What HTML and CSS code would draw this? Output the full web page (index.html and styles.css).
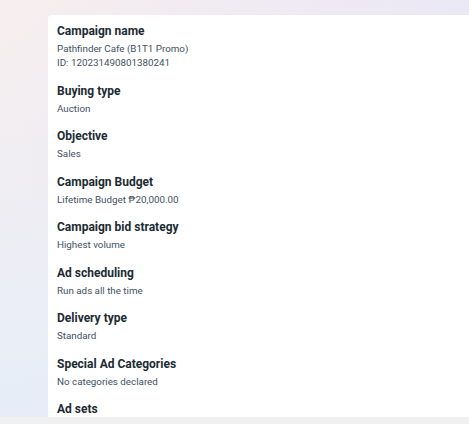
FILE: index.html
```html
<!DOCTYPE html>
<html>
<head>
<meta charset="utf-8">
<link rel="stylesheet" href="styles.css">
</head>
<body>
<div class="page">
  <div class="stage">
    <div class="card">
      <div class="section">
        <div class="label">Campaign name</div>
        <div class="value">Pathfinder Cafe (B1T1 Promo)</div>
        <div class="value">ID: 120231490801380241</div>
      </div>
      <div class="section">
        <div class="label">Buying type</div>
        <div class="value">Auction</div>
      </div>
      <div class="section">
        <div class="label">Objective</div>
        <div class="value">Sales</div>
      </div>
      <div class="section">
        <div class="label">Campaign Budget</div>
        <div class="value">Lifetime Budget ₱20,000.00</div>
      </div>
      <div class="section">
        <div class="label">Campaign bid strategy</div>
        <div class="value">Highest volume</div>
      </div>
      <div class="section">
        <div class="label">Ad scheduling</div>
        <div class="value">Run ads all the time</div>
      </div>
      <div class="section">
        <div class="label">Delivery type</div>
        <div class="value">Standard</div>
      </div>
      <div class="section">
        <div class="label">Special Ad Categories</div>
        <div class="value">No categories declared</div>
      </div>
      <div class="section">
        <div class="label">Ad sets</div>
      </div>
    </div>
  </div>
  <div class="footer"></div>
</div>
</body>
</html>
```

FILE: styles.css
```css
html, body {
  margin: 0;
  padding: 0;
}
body {
  font-family: Roboto, Lato, sans-serif;
  width: 469px;
  height: 424px;
  overflow: hidden;
}
.page {
  display: flex;
  flex-direction: column;
  height: 424px;
}
.stage {
  flex: 1;
  min-height: 0;
  overflow: hidden;
  padding: 15px 0 0 48px;
  background:
    linear-gradient(180deg, rgba(228, 237, 249, 0) 0%, rgba(228, 237, 249, 0.9) 100%),
    linear-gradient(90deg, #f7eeee 0%, #efeaf3 60%, #ebe8f6 100%);
}
.card {
  background: #ffffff;
  border-top-left-radius: 4px;
  height: 100%;
  padding: 7px 0 0 9px;
  box-sizing: border-box;
  overflow: hidden;
}
.section {
  margin-bottom: 11.5px;
}
.label {
  font-size: 12px;
  font-weight: 700;
  line-height: 18px;
  color: #1c2b33;
  margin-bottom: 2px;
}
.value {
  font-size: 9.8px;
  line-height: 14px;
  color: #3f5261;
}
.footer {
  height: 7px;
  background: #f0f0f0;
  flex: none;
}
```
